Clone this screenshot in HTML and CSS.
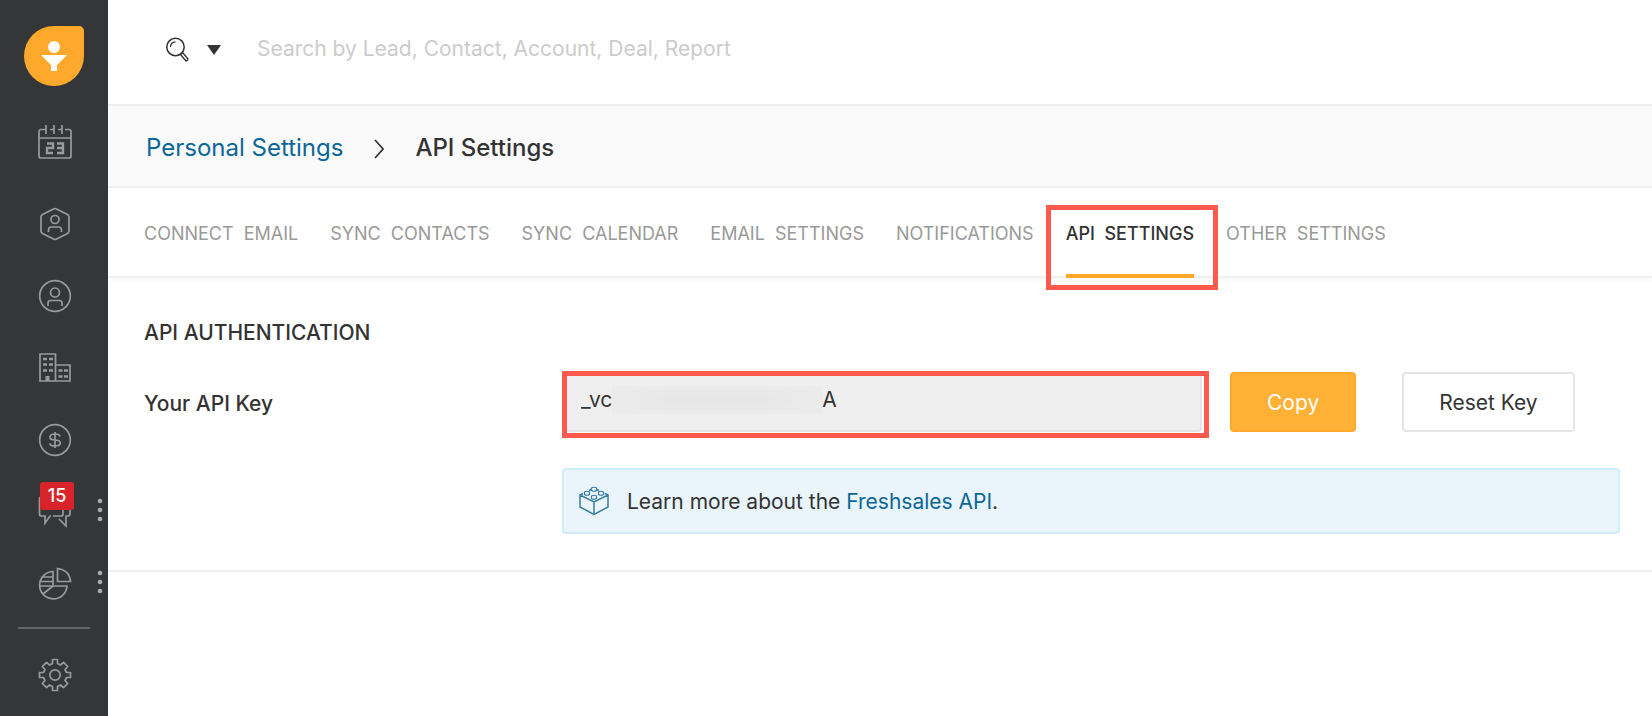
FILE: index.html
```html
<!DOCTYPE html>
<html lang="en">
<head>
<meta charset="utf-8">
<title>API Settings</title>
<link rel="stylesheet" href="styles.css">
</head>
<body>
<div class="app">
  <aside class="sidebar">
    <a class="logo" href="#" aria-label="Home">
      <svg width="60" height="60" viewBox="0 0 60 60"><path d="M30 0h25a5 5 0 0 1 5 5v25A30 30 0 1 1 30 0z" fill="#fea92c"/><circle cx="30" cy="21" r="6" fill="#fff"/><path d="M17 29h26L33 39v6h-6v-6z" fill="#fff"/></svg>
    </a>
    <nav class="nav" aria-label="Main">
      <a class="nav-item nav-first" href="#" aria-label="Calendar">
        <svg class="icon" width="34" height="34" viewBox="0 0 34 34"><path d="M3.500 4.500H3a2 2 0 0 0-2 2V31a2 2 0 0 0 2 2h28a2 2 0 0 0 2-2V6.500a2 2 0 0 0-2-2h-4M1 13h32M8 0v9M16 0v9M24 0v9M3 4.500h5M12 4.500h4M20 4.500h4"/><path d="M9 18.500h6v4.500H9v5h6M19 18.500h6V28h-6M19 23h6" stroke-width="2.400"/></svg>
      </a>
      <a class="nav-item" href="#" aria-label="Leads">
        <svg class="icon" width="34" height="34" viewBox="0 0 34 34"><path d="M15.500 1.900q1.500-.8 3 0l11 5.600q1.500.8 1.500 2.500v14q0 1.700-1.500 2.500l-11 5.600q-1.500.8-3 0l-11-5.600Q3 25.700 3 24V10q0-1.700 1.500-2.500z"/><circle cx="17" cy="12.500" r="4"/><path d="M10.500 25v-2q0-3 3-3h7q3 0 3 3v2"/></svg>
      </a>
      <a class="nav-item" href="#" aria-label="Contacts">
        <svg class="icon" width="34" height="34" viewBox="0 0 34 34"><circle cx="17" cy="17" r="15.300"/><circle cx="17" cy="13.500" r="4.500"/><path d="M10 27v-3q0-2.500 2.500-2.500h9q2.500 0 2.500 2.500v3"/></svg>
      </a>
      <a class="nav-item" href="#" aria-label="Accounts">
        <svg class="icon" width="34" height="34" viewBox="0 0 34 34"><path d="M2 3h15.500v27H2zM17.500 14H32v16H17.500"/><path d="M5 8h4M11 8h4M5 13.500h4M11 13.500h4M5 19.500h4M11 19.500h4M20.500 19.500h4M26 19.500h4M20.500 25.500h4M26 25.500h4" stroke-width="2.500"/><path d="M9.500 25v5" stroke-width="4"/></svg>
      </a>
      <a class="nav-item" href="#" aria-label="Deals">
        <svg class="icon" width="34" height="34" viewBox="0 0 34 34"><circle cx="17" cy="17" r="15.300"/><path d="M22 13.500Q21.500 11 17 11q-5 0-5 3t5 3q5.300 0 5.300 3t-5.300 3q-5 0-5.300-2.700M17 9v16"/></svg>
      </a>
      <a class="nav-item" href="#" aria-label="Conversations, 15 unread">
        <svg class="icon" width="34" height="34" viewBox="0 0 34 34"><path d="M3 2Q1.500 2 1.500 4v15q0 2 2 2H7v7l5-7h1M15 21h8q2 0 2-2v-9M29 3h1q2 0 2 2v13.500q0 2.500-2 2.500h-2v10l-7-7"/></svg>
        <span class="badge">15</span>
        <svg class="more" width="6" height="24" viewBox="0 0 6 24"><circle cx="3" cy="3" r="2.300"/><circle cx="3" cy="12" r="2.300"/><circle cx="3" cy="21" r="2.300"/></svg>
      </a>
      <a class="nav-item" href="#" aria-label="Reports">
        <svg class="icon" width="34" height="34" viewBox="0 0 34 34"><path d="M19.500 1.500V14.500H32.500Q31.500 3 19.500 1.500zM15 4.500A13.700 13.700 0 1 0 29 19H15zM15 19l-10 8M4 10h11M2 14.500h13M2 19h13"/></svg>
        <svg class="more" width="6" height="24" viewBox="0 0 6 24"><circle cx="3" cy="3" r="2.300"/><circle cx="3" cy="12" r="2.300"/><circle cx="3" cy="21" r="2.300"/></svg>
      </a>
    </nav>
    <a class="nav-item nav-last" href="#" aria-label="Settings">
      <svg class="icon" width="34" height="34" viewBox="0 0 34 34"><circle cx="17" cy="17" r="5.200"/><path d="M14.500 1.500h5V5.500L22.500 7l3-2.700L29.700 8.500 27 11.500l1.500 3h4v5h-4L27 22.500l2.700 3-4.200 4.200-3-2.700-3 1.500v4h-5v-4l-3-1.500-3 2.700-4.200-4.200 2.700-3-1.500-3h-4v-5h4l1.500-3-2.700-3 4.200-4.200 3 2.700 3-1.500z" stroke-linejoin="round"/></svg>
    </a>
  </aside>

  <div class="page">
    <header class="topbar">
      <button class="scope" type="button" aria-label="Search scope">
        <svg width="24" height="28" viewBox="0 0 24 28" fill="none" stroke="#333"><circle cx="9.500" cy="11" r="8.700" stroke-width="1.500"/><path d="M4.500 11q0-5 5-5.200M14.500 18.500l2-2 5.500 6.500q-.3 2-2 2z" stroke-width="1.300"/></svg>
        <svg width="14" height="10" viewBox="0 0 14 10"><path d="M0 0h14L7 10z" fill="#333"/></svg>
      </button>
      <input class="search" type="search" aria-label="Search" placeholder="Search by Lead, Contact, Account, Deal, Report">
    </header>

    <div class="crumbs">
      <a class="link" href="#">Personal Settings</a>
      <svg class="chevron" width="10" height="20" viewBox="0 0 10 20" fill="none" stroke="#333" stroke-width="1.700"><path d="M1 1l8 9-8 9"/></svg>
      <h1 class="crumb-current">API Settings</h1>
    </div>

    <nav class="tabs" aria-label="Settings">
      <a class="tab" href="#">CONNECT&nbsp; EMAIL</a>
      <a class="tab" href="#">SYNC&nbsp; CONTACTS</a>
      <a class="tab" href="#">SYNC&nbsp; CALENDAR</a>
      <a class="tab" href="#">EMAIL&nbsp; SETTINGS</a>
      <a class="tab" href="#">NOTIFICATIONS</a>
      <a class="tab tab-active" href="#" aria-current="page">API&nbsp; SETTINGS</a>
      <a class="tab" href="#">OTHER&nbsp; SETTINGS</a>
    </nav>

    <main class="section">
      <h2 class="section-title">API AUTHENTICATION</h2>
      <div class="form">
        <label class="label" for="key">Your API Key</label>
        <div class="row">
          <div class="key">
            <input class="key-input" id="key" type="text" readonly value="_vc&emsp;&emsp;&emsp;&emsp;&emsp;&emsp;&emsp;&emsp;&emsp;&emsp;A">
            <span class="key-mask"></span>
          </div>
          <button class="btn btn-primary" type="button">Copy</button>
          <button class="btn btn-plain" type="button">Reset Key</button>
        </div>
        <div class="info">
          <svg width="30" height="30" viewBox="0 0 30 30" fill="none" stroke="#3a7ca0" stroke-width="1.500"><path d="M4 7.500L1 9v12l14 7.500L29 21V9l-3-1.500M1 9l14 7 14-7M15 16v12M10 4.500l2-1M20 4.500l-2-1"/><path d="M12.500 2v2.500q2.500 1.500 5 0V2q-2.500-1.500-5 0zM5.500 6v2.500q2.500 1.500 5 0V6q-2.500-1.500-5 0zM19.500 6v2.500q2.500 1.500 5 0V6q-2.500-1.500-5 0zM12.500 10v2.500q2.500 1.500 5 0V10q-2.500-1.500-5 0z" stroke-width="1.200"/></svg>
          <p class="info-text">Learn more about the <a class="link" href="#">Freshsales API</a>.</p>
        </div>
      </div>
    </main>
  </div>
</div>
</body>
</html>
```
FILE: styles.css
```css
* { box-sizing: border-box; }
body {
  margin: 0;
  background: #fff;
  color: #333;
  font-family: Inter, "Liberation Sans", sans-serif;
  font-size: 21px;
}
a { text-decoration: none; color: inherit; }
h1, h2, p { margin: 0; }
button, input { font: inherit; color: inherit; }
.link { color: #0b6799; }

.app { display: flex; min-height: 100vh; }
.sidebar {
  width: 108px;
  flex: none;
  padding-top: 26px;
  background: #353638;
  display: flex;
  flex-direction: column;
}
.logo { height: 60px; padding-left: 24px; }
.logo svg { display: block; }
.nav { padding: 5px 0 1px; }
.nav-item {
  position: relative;
  height: 72px;
  padding-left: 2px;
  display: flex;
  align-items: center;
  justify-content: center;
}
.nav-first { height: 102px; margin-bottom: -5px; }
.nav-last { height: 90px; margin-top: 6px; padding-top: 6px; }
.nav-last::before {
  content: "";
  position: absolute;
  top: 0;
  left: 18px;
  right: 18px;
  height: 2px;
  background: #646566;
}
.icon { fill: none; stroke: #999a9b; stroke-width: 1.7; }
.badge {
  position: absolute;
  left: 40px;
  top: 6px;
  width: 34px;
  height: 28px;
  border-radius: 3px;
  background: #d9232b;
  color: #fff;
  font-size: 18px;
  font-weight: 500;
  line-height: 28px;
  text-align: center;
}
.more { position: absolute; right: 5px; top: 22px; fill: #aaabac; }

.page { flex: 1; min-width: 0; }
.topbar {
  height: 106px;
  padding: 0 36px 8px 58px;
  border-bottom: 2px solid #efefef;
  display: flex;
  align-items: center;
  gap: 36px;
}
.scope {
  padding: 4px 0 0;
  border: 0;
  background: none;
  display: flex;
  align-items: center;
  gap: 17px;
}
.search {
  flex: 1;
  padding: 0;
  border: 0;
  outline: 0;
  background: none;
}
.search::placeholder { color: #ccc; }

.crumbs {
  height: 82px;
  padding: 2px 36px 0 38px;
  border-bottom: 2px solid #efefef;
  background: #fafafa;
  display: flex;
  align-items: center;
  gap: 31px;
  font-size: 24px;
}
.chevron { margin-top: 4px; }
.crumb-current { font-size: 24px; font-weight: 500; }

.tabs {
  height: 90px;
  padding: 0 36px;
  border-bottom: 2px solid #efefef;
  box-shadow: 0 3px 6px rgba(0, 0, 0, 0.03);
  display: flex;
  gap: 32px;
  color: #999;
  font-size: 18px;
  line-height: 92px;
  white-space: nowrap;
}
.tab { position: relative; }
.tab-active { height: 90px; border-bottom: 4px solid #fea92c; color: #333; font-weight: 500; }
.tab-active::before {
  content: "";
  position: absolute;
  top: 17px;
  bottom: -16px;
  left: -20px;
  right: -24px;
  border: 5px solid #ff5a4d;
}

.section { padding: 40px 32px 36px 36px; border-bottom: 2px solid #efefef; }
.section-title { font-size: 21px; font-weight: 500; line-height: 30px; }
.form {
  padding-top: 24px;
  display: grid;
  grid-template-columns: 418px 1fr;
  row-gap: 32px;
}
.label { font-weight: 500; line-height: 64px; }
.row { height: 60px; display: flex; }
.key { position: relative; flex: 0 1 640px; margin-right: 28px; }
.key::after {
  content: "";
  position: absolute;
  top: -1px;
  bottom: -6px;
  left: 0;
  right: -7px;
  border: 5px solid #ff5a4d;
  pointer-events: none;
}
.key-input {
  width: 100%;
  height: 60px;
  padding: 0 17px 6px;
  border: 2px solid #e4e4e4;
  border-radius: 4px;
  background: #efefef;
}
.key-mask {
  position: absolute;
  left: 50px;
  top: 14px;
  width: 210px;
  height: 28px;
  background: radial-gradient(ellipse, #e6e6e6, #ececec);
}
.btn { height: 60px; padding: 0 35px; border: 2px solid; border-radius: 4px; }
.btn-primary { margin-right: 46px; border-color: #fea92c; background: #feb135; color: #fff; }
.btn-plain { border-color: #e5e5e5; background: #fff; }
.info {
  grid-column: 2;
  min-height: 66px;
  padding: 0 15px;
  border: 2px solid #cdeef6;
  border-radius: 4px;
  background: #e9f4fb;
  display: flex;
  align-items: center;
  gap: 18px;
}
```
